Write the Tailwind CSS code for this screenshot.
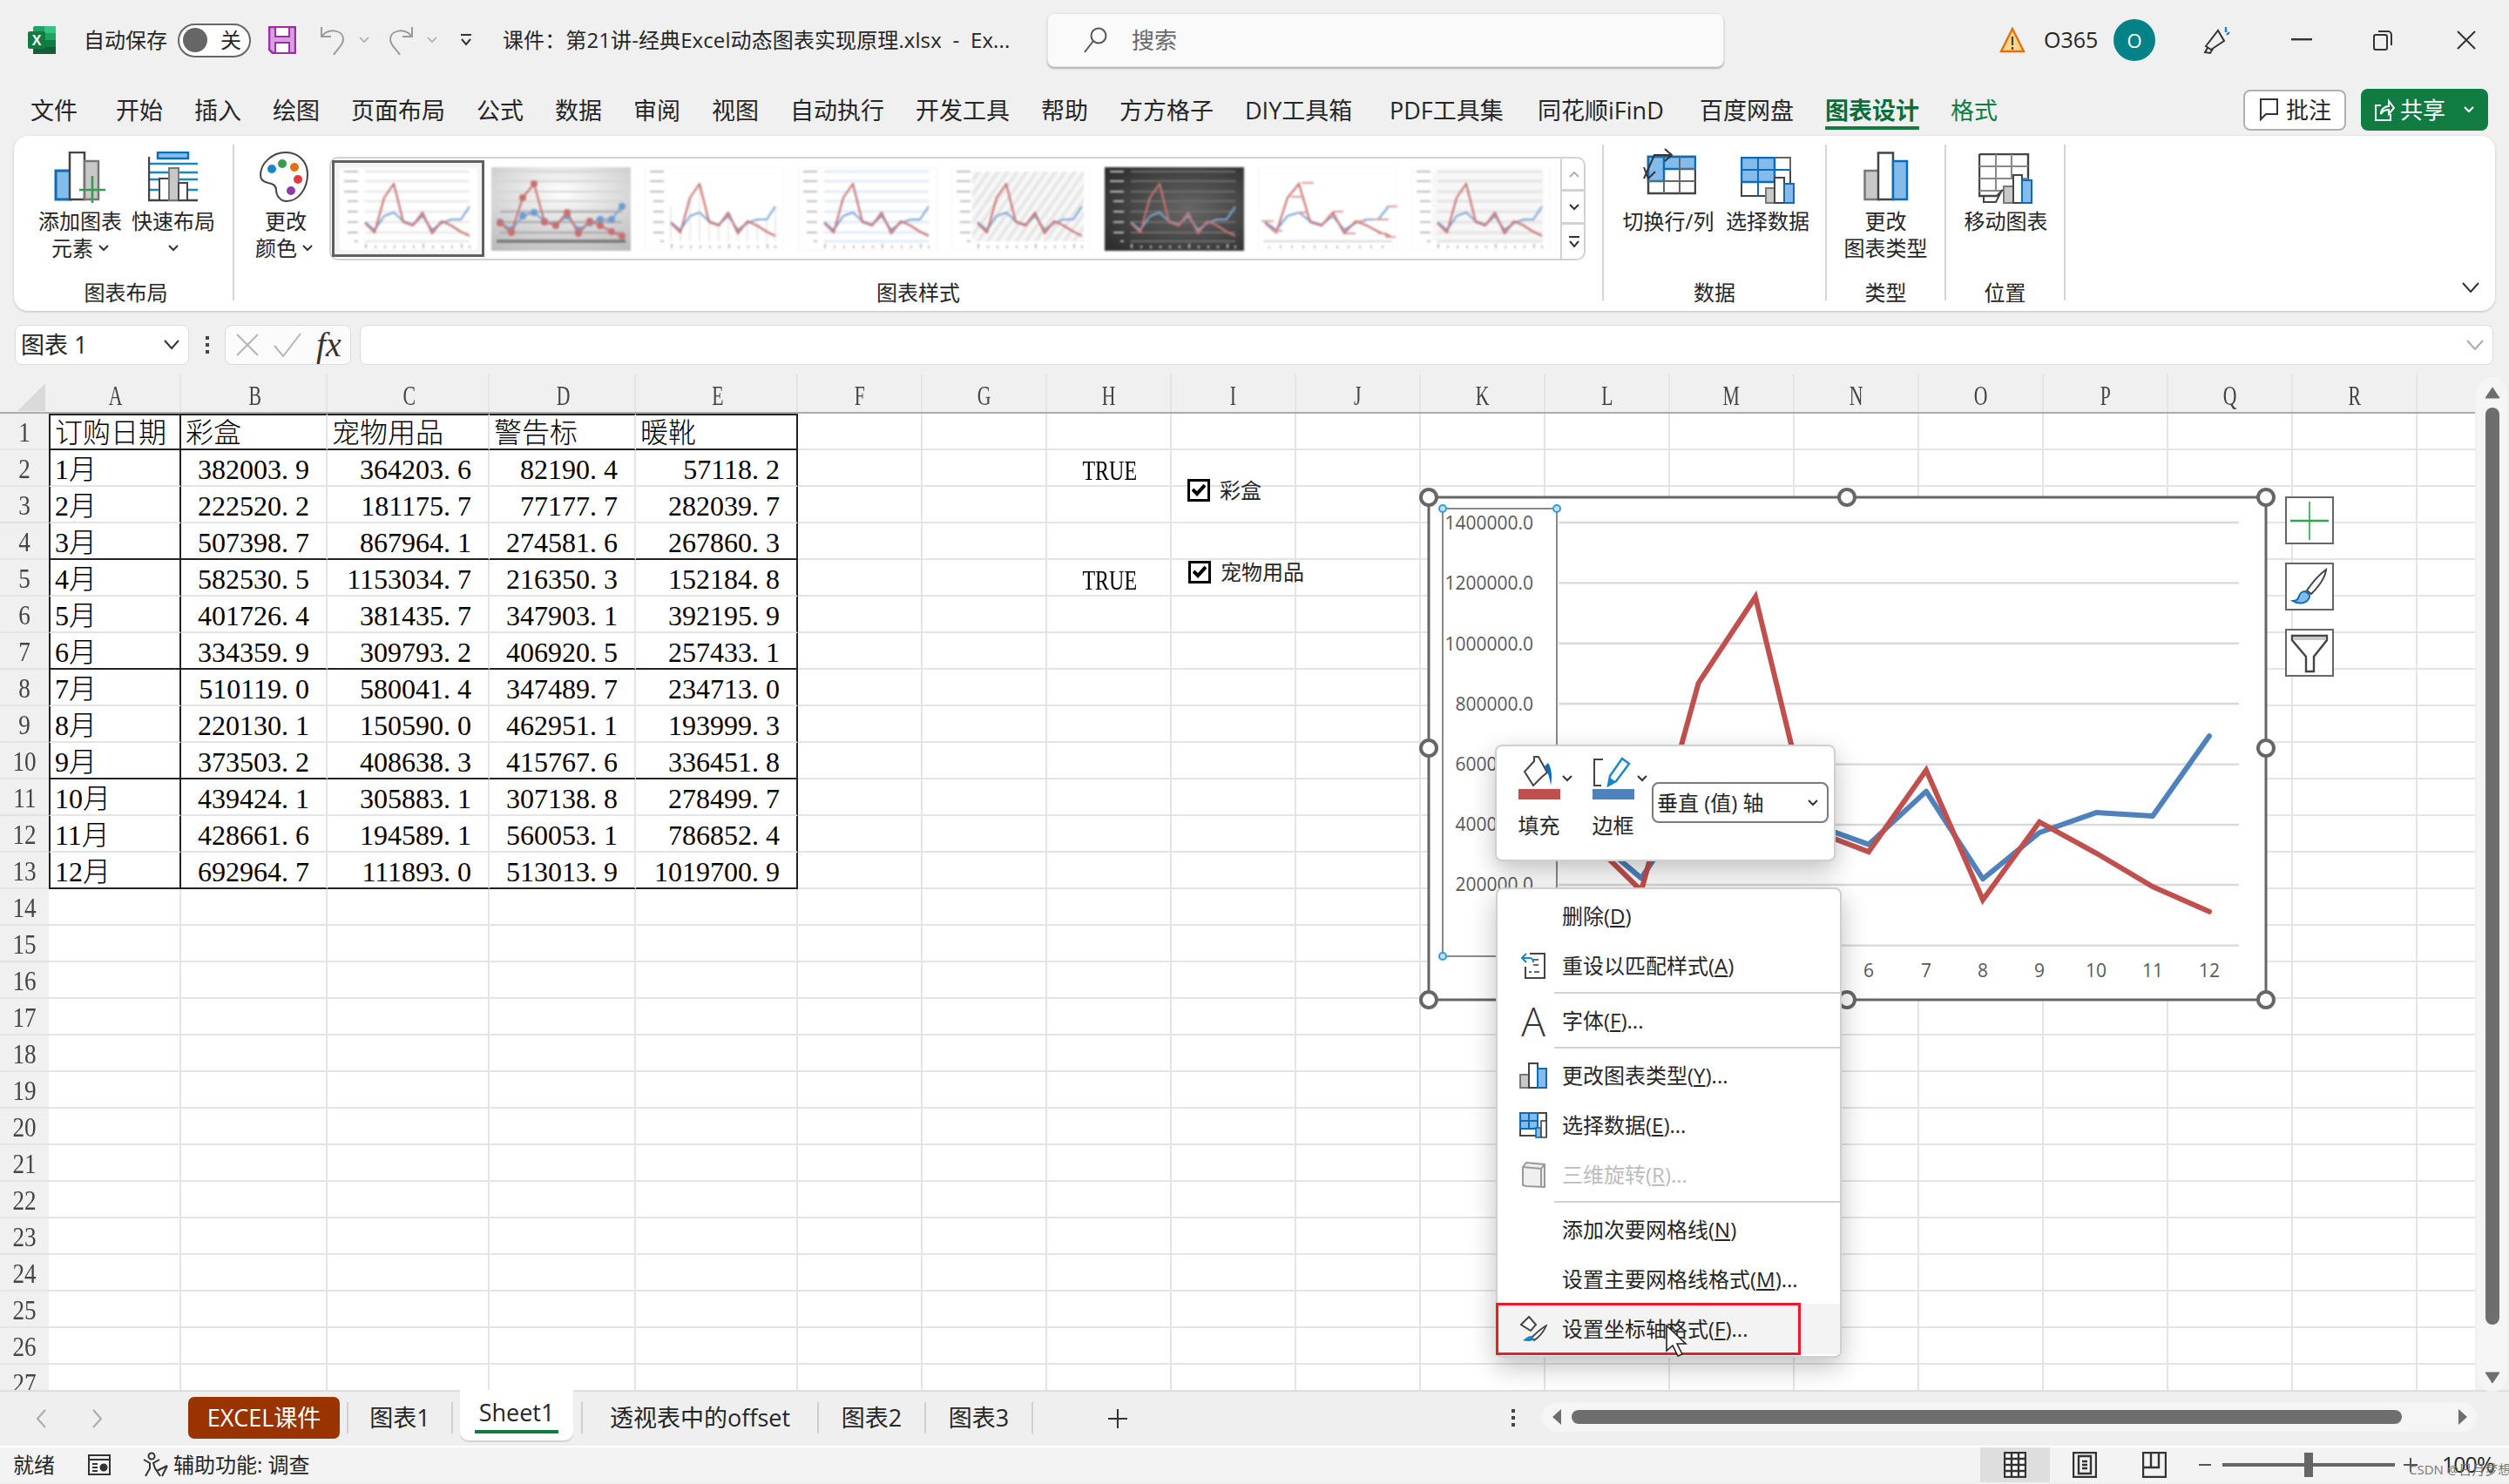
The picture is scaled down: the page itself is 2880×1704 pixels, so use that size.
<!DOCTYPE html>
<html lang="zh-CN">
<head>
<meta charset="utf-8">
<title>Excel</title>
<script src="https://cdn.jsdelivr.net/npm/@tailwindcss/browser@4"></script>
</head>
<body class="relative w-[2880px] h-[1704px] overflow-hidden bg-[#f0f0f0] text-[#262626] text-[24px] font-['Open_Sans','Noto_Sans_CJK_SC',sans-serif]">

<svg width="0" height="0" class="absolute">
  <defs>
    <g id="ln" fill="none" stroke-width="2.2" stroke-linejoin="round">
      <polyline stroke="#7ea6d8" points="30,63 41,72 52,56 63,52 74,62 85,66 96,56 107,72 118,64 129,60 140,60 150,45"/>
      <polyline stroke="#cb7472" points="30,64 41,75 52,35 63,19 74,63 85,67 96,52 107,76 118,62 129,67 140,74 150,79"/>
    </g>
    <g id="ax" stroke="#bdbdbd" stroke-width="2">
      <path d="M6 5h16M6 16h16M6 28h16M10 39h12M10 51h12M10 63h12M10 75h12M18 85h4"/>
      <path d="M31 88v5M42 90v3M53 90v3M64 90v3M75 90v3M86 90v3M97 88v5M108 90v3M119 90v3M130 90v3M141 88v5M150 90v3"/>
    </g>
    <path id="gr" d="M30 5h120M30 16h120M30 28h120M30 39h120M30 51h120M30 63h120M30 75h120M30 85h120"/>
    <radialGradient id="rg" cx="50%" cy="30%" r="80%"><stop offset="0" stop-color="#ffffff"/><stop offset="1" stop-color="#bcbcbc"/></radialGradient>
    <radialGradient id="rd" cx="60%" cy="50%" r="70%"><stop offset="0" stop-color="#666666"/><stop offset="1" stop-color="#2f2f2f"/></radialGradient>
    <pattern id="dg" width="9" height="9" patternUnits="userSpaceOnUse" patternTransform="rotate(35)"><rect width="9" height="9" fill="#f8f8f8"/><rect width="4" height="9" fill="#e6e6e6"/></pattern>
    <marker id="mb" markerWidth="5" markerHeight="5" refX="2.5" refY="2.5"><circle cx="2.5" cy="2.5" r="1.8" fill="#6f9bd1"/></marker>
    <marker id="mr" markerWidth="5" markerHeight="5" refX="2.5" refY="2.5"><circle cx="2.5" cy="2.5" r="1.8" fill="#cb6f6d"/></marker>
  </defs>
</svg>

<!-- title bar -->
<header class="flex h-[100px] items-center pb-[8px]">
  <svg class="ml-[32px] shrink-0" width="32" height="32" viewBox="0 0 32 32"><rect x="6" width="26" height="32" rx="2" fill="#21a366"/><rect x="19" width="13" height="8" fill="#33c481"/><rect x="19" y="16" width="13" height="8" fill="#107c41"/><rect x="6" y="16" width="13" height="16" fill="#185c37"/><rect x="19" y="24" width="13" height="8" fill="#185c37"/><rect y="6" width="20" height="20" rx="2" fill="#107c41"/><text x="10" y="22" text-anchor="middle" font-size="16" font-weight="700" fill="#fff" font-family="Liberation Sans">X</text></svg>
  <span class="ml-[32px] w-[108px] shrink-0">自动保存</span>
  <div class="flex h-[39px] w-[84px] shrink-0 items-center justify-between rounded-full border-2 border-[#666] bg-white pl-[4px] pr-[9px]"><span class="h-[28px] w-[28px] rounded-full bg-[#666]"></span><span class="leading-none">关</span></div>
  <svg class="ml-[20px] shrink-0" width="32" height="32" viewBox="0 0 32 32"><path d="M1 1h30v30H5l-4-4z" fill="#d9a0e0" stroke="#9c2fa8" stroke-width="2.5"/><rect x="8" y="1" width="16" height="11" fill="#fff" stroke="#9c2fa8" stroke-width="2"/><rect x="8" y="19" width="16" height="12" fill="#fff" stroke="#9c2fa8" stroke-width="2"/></svg>
  <svg class="ml-[26px] shrink-0" width="32" height="34" viewBox="0 0 32 34" fill="none" stroke="#9a9a9a" stroke-width="2"><path d="M3 2v11h11M3 13C12 2 28 6 28 16c0 7-6 10-11 18"/></svg>
  <svg class="ml-[14px] shrink-0" width="12" height="8" viewBox="0 0 12 8" fill="none" stroke="#aaa" stroke-width="1.6"><path d="M1 1l5 5 5-5"/></svg>
  <svg class="ml-[20px] shrink-0" width="32" height="34" viewBox="0 0 32 34" fill="none" stroke="#9a9a9a" stroke-width="2"><path d="M29 2v11H18M29 13C20 2 4 6 4 16c0 7 6 10 11 18"/></svg>
  <svg class="ml-[14px] shrink-0" width="12" height="8" viewBox="0 0 12 8" fill="none" stroke="#aaa" stroke-width="1.6"><path d="M1 1l5 5 5-5"/></svg>
  <svg class="ml-[26px] shrink-0" width="14" height="16" viewBox="0 0 14 16" fill="none" stroke="#333" stroke-width="2"><path d="M1 2h12M2 7l5 6 5-6"/></svg>
  <span class="ml-[35px] w-[590px] shrink-0 whitespace-pre text-[24px] tracking-[0.1px]">课件：第21讲-经典Excel动态图表实现原理.xlsx  -  Ex...</span>
  <div class="ml-[35px] flex h-[62px] w-[777px] shrink-0 items-center rounded-[8px] border border-[#e4e4e4] bg-[#fafafa] pl-[40px] shadow-[0_2px_2px_rgba(0,0,0,0.25)]">
    <svg width="28" height="30" viewBox="0 0 28 30" fill="none" stroke="#555" stroke-width="2"><circle cx="18" cy="10" r="8.5"/><path d="M12 16L2 29"/></svg>
    <span class="ml-[28px] text-[#6a6a6a] text-[26px]">搜索</span>
  </div>
  <svg class="ml-[316px] shrink-0" width="30" height="30" viewBox="0 0 30 30"><path d="M15 2l13 26H2z" fill="#ffd58a" stroke="#e3700f" stroke-width="2.4"/><path d="M15 11v10M15 23v3" stroke="#444" stroke-width="2.2"/></svg>
  <span class="ml-[21px] w-[64px] shrink-0 text-[25px]">O365</span>
  <div class="ml-[16px] flex h-[48px] w-[48px] shrink-0 items-center justify-center rounded-full bg-[#038387] text-[22px] text-white">O</div>
  <svg class="ml-[54px] shrink-0" width="34" height="34" viewBox="0 0 34 34" fill="none" stroke="#333" stroke-width="2"><path d="M4 24L18 6l7 12-15 10zM6 26l-3 5 6 1 3-5"/><path d="M27 2v6M31 8l-3 3" stroke="#1a86c8" stroke-width="2.4"/></svg>
  <svg class="ml-[68px] shrink-0" width="24" height="4" viewBox="0 0 24 4"><rect width="24" height="2.4" fill="#333"/></svg>
  <svg class="ml-[70px] shrink-0" width="22" height="24" viewBox="0 0 22 24" fill="none" stroke="#333" stroke-width="2"><rect x="1" y="6" width="15" height="17" rx="2"/><path d="M6 2h11a4 4 0 0 1 4 4v12"/></svg>
  <svg class="ml-[74px] shrink-0" width="22" height="22" viewBox="0 0 22 22" fill="none" stroke="#333" stroke-width="2"><path d="M1 1l20 20M21 1L1 21"/></svg>
</header>

<!-- menu tabs -->
<nav class="flex h-[56px] items-start pl-[35px] text-[27px] leading-[54px]">
  <a>文件</a><a class="ml-[44px]">开始</a><a class="ml-[36px]">插入</a><a class="ml-[36px]">绘图</a><a class="ml-[36px]">页面布局</a><a class="ml-[36px]">公式</a><a class="ml-[36px]">数据</a><a class="ml-[36px]">审阅</a><a class="ml-[36px]">视图</a><a class="ml-[36px]">自动执行</a><a class="ml-[36px]">开发工具</a><a class="ml-[36px]">帮助</a><a class="ml-[36px]">方方格子</a>
  <a class="ml-[36px] w-[124px] whitespace-nowrap">DIY工具箱</a><a class="ml-[42px] w-[130px] whitespace-nowrap">PDF工具集</a><a class="ml-[40px] w-[146px] whitespace-nowrap">同花顺iFinD</a><a class="ml-[40px]">百度网盘</a>
  <a class="relative ml-[36px] h-[49px] border-b-[4px] border-[#107c41] font-bold text-[#0f6b3a]">图表设计</a><a class="ml-[36px] text-[#107c41]">格式</a>
  <div class="ml-auto mr-[24px] flex h-[48px] items-center gap-[17px] self-start leading-none mt-[2px]">
    <div class="flex h-[47px] w-[118px] items-center justify-center gap-[8px] rounded-[8px] border-2 border-[#b0b0b0] bg-white text-[26px]"><svg width="24" height="28" viewBox="0 0 24 28" fill="none" stroke="#333" stroke-width="2"><path d="M2 2h20v17H9l-6 6V2z"/></svg>批注</div>
    <div class="flex h-[48px] w-[146px] items-center gap-[6px] rounded-[8px] bg-[#107c41] pl-[15px] text-[26px] text-white"><svg width="24" height="28" viewBox="0 0 24 28" fill="none" stroke="#fff" stroke-width="2"><path d="M8 9H2v17h17v-7M8 19c0-6 5-9 9-9V4l6 8-6 7v-5c-4 0-7 1-9 5z"/></svg>共享<svg class="ml-[15px]" width="12" height="8" viewBox="0 0 12 8" fill="none" stroke="#fff" stroke-width="2"><path d="M1 1l5 5 5-5"/></svg></div>
  </div>
</nav>

<!-- ribbon -->
<section class="relative mx-[16px] flex h-[201px] rounded-[16px] bg-white pt-[10px] shadow-[0_1px_3px_rgba(0,0,0,0.22)]">
  <!-- group 1 -->
  <div class="flex h-[179px] w-[253px] shrink-0 flex-col border-r-2 border-[#d4d4d4]">
    <div class="flex flex-1 pl-[22px]">
      <div class="flex w-[108px] flex-col items-center leading-[31px]">
        <svg class="mt-[8px]" width="60" height="60" viewBox="0 0 60 60"><rect x="2" y="22" width="17" height="33" fill="#83bcea" stroke="#0e6bb5" stroke-width="3"/><rect x="18" y="1" width="17" height="54" fill="#fff" stroke="#444" stroke-width="2.5"/><rect x="35" y="11" width="16" height="44" fill="#c8c8c8" stroke="#777" stroke-width="2.5"/><path d="M29 44h30M44 28v31" stroke="#3a9a52" stroke-width="2.6"/></svg>
        <span class="mt-[4px]">添加图表</span>
        <span class="flex items-center gap-[6px]">元素<svg width="12" height="8" viewBox="0 0 12 8" fill="none" stroke="#333" stroke-width="2"><path d="M1 1l5 5 5-5"/></svg></span>
      </div>
      <div class="flex w-[106px] flex-col items-center leading-[31px]">
        <svg class="mt-[8px]" width="58" height="60" viewBox="0 0 58 60"><rect x="11" y="1" width="35" height="7" fill="#83bcea" stroke="#0e6bb5" stroke-width="2.4"/><path d="M1 14h56M1 24h56M1 32h56M1 44h56" stroke="#1a86c8" stroke-width="2.6"/><path d="M1 6v50h56" fill="none" stroke="#444" stroke-width="2.4"/><rect x="13" y="31" width="11" height="25" fill="#fff" stroke="#444" stroke-width="2"/><rect x="24" y="19" width="11" height="37" fill="#c8c8c8" stroke="#777" stroke-width="2"/><rect x="35" y="36" width="10" height="20" fill="#fff" stroke="#444" stroke-width="2"/></svg>
        <span class="mt-[4px]">快速布局</span>
        <span class="flex h-[31px] items-center"><svg width="12" height="8" viewBox="0 0 12 8" fill="none" stroke="#333" stroke-width="2"><path d="M1 1l5 5 5-5"/></svg></span>
      </div>
    </div>
    <span class="h-[20px] pl-[6px] text-center leading-[22px]">图表布局</span>
  </div>
  <!-- group 2 -->
  <div class="flex h-[179px] w-[1572px] shrink-0 flex-col border-r-2 border-[#d4d4d4]">
    <div class="flex flex-1 pl-[9px]">
      <div class="flex w-[96px] flex-col items-center leading-[31px]">
        <svg class="mt-[8px]" width="56" height="60" viewBox="0 0 56 60"><path d="M30 1C14 1 1 14 1 27c0 5 4 8 9 9 6 1 9 3 9 8 0 7 5 13 12 13 14 0 24-15 24-31C55 12 45 1 30 1z" fill="#fff" stroke="#444" stroke-width="2"/><circle cx="14" cy="20" r="5" fill="#1a86c8"/><circle cx="26" cy="14" r="5" fill="#3a9a52"/><circle cx="40" cy="18" r="5" fill="#e3700f"/><circle cx="44" cy="32" r="5" fill="#e8383d"/><circle cx="36" cy="45" r="5" fill="#8e3aa8"/></svg>
        <span class="mt-[4px] pl-[4px]">更改</span>
        <span class="flex items-center gap-[6px]">颜色<svg width="12" height="8" viewBox="0 0 12 8" fill="none" stroke="#333" stroke-width="2"><path d="M1 1l5 5 5-5"/></svg></span>
      </div>
      <!-- gallery -->
      <div class="ml-[4px] mt-[14px] flex h-[119px] w-[1442px] items-center rounded-[10px] border-2 border-[#d2d2d2] pl-[1px]">
        <div class="flex h-[111px] w-[175px] shrink-0 items-center justify-center border-[3px] border-[#5f5f5f] bg-[#f3f3f3]">
          <svg class="blur-[1px]" width="160" height="96" viewBox="0 0 160 96"><rect width="160" height="96" fill="#fff" stroke="#eee"/><use href="#gr" stroke="#e8e8e8" stroke-width="2.5"/><use href="#ax"/><use href="#ln"/></svg>
        </div>
        <svg class="ml-[8px] shrink-0 blur-[1px]" width="160" height="96" viewBox="0 0 160 96"><rect width="160" height="96" fill="url(#rg)"/><path d="M10 5h140M10 16h140M10 28h140M10 39h140" stroke="#d5d5d5" stroke-width="2"/><path d="M10 51h140M10 63h140M10 75h140" stroke="#aeaeae" stroke-width="2.5"/><path d="M6 85h148" stroke="#777" stroke-width="3.5"/><g fill="none" stroke-width="2.2"><polyline stroke="#7ea6d8" marker-start="url(#mb)" marker-mid="url(#mb)" marker-end="url(#mb)" points="10,63 23,72 36,56 49,52 61,62 74,66 87,56 100,72 113,64 125,60 138,60 150,45"/><polyline stroke="#cb7472" marker-start="url(#mr)" marker-mid="url(#mr)" marker-end="url(#mr)" points="10,64 23,75 36,35 49,19 61,63 74,67 87,52 100,76 113,62 125,67 138,74 150,79"/></g></svg>
        <svg class="ml-[16px] shrink-0 blur-[1px]" width="160" height="96" viewBox="0 0 160 96"><rect width="160" height="96" fill="#fff" stroke="#eee"/><path d="M30 85V45M41 85V70M52 85V35M63 85V19M74 85V60M85 85V65M96 85V52M107 85V70M118 85V60M129 85V60M140 85V60M150 85V45" stroke="#ebebeb" stroke-width="2"/><use href="#ax"/><use href="#ln"/></svg>
        <svg class="ml-[16px] shrink-0 blur-[1px]" width="160" height="96" viewBox="0 0 160 96"><rect width="160" height="96" fill="#fff" stroke="#dfe9f5"/><use href="#gr" stroke="#e2ecf7" stroke-width="3"/><use href="#ax" stroke="#8fa9c9"/><use href="#ln"/></svg>
        <svg class="ml-[16px] shrink-0 blur-[1px]" width="160" height="96" viewBox="0 0 160 96"><rect width="160" height="96" fill="#fff" stroke="#eee"/><rect x="24" y="5" width="128" height="80" fill="url(#dg)"/><use href="#ax"/><use href="#ln"/></svg>
        <svg class="ml-[16px] shrink-0 blur-[1px]" width="160" height="96" viewBox="0 0 160 96"><rect width="160" height="96" fill="url(#rd)"/><use href="#gr" stroke="#6e6e6e" stroke-width="2"/><use href="#ax" stroke="#999"/><use href="#ln"/></svg>
        <svg class="ml-[16px] shrink-0 blur-[1px]" width="160" height="96" viewBox="0 0 160 96"><rect width="160" height="96" fill="#fff" stroke="#eee"/><path d="M6 85h148" stroke="#ddd" stroke-width="2.5"/><path d="M13 91v2M26 90v3M39 90v3M52 90v3M65 90v3M78 90v3M91 90v3M104 90v3M117 90v3M130 90v3M143 90v3" stroke="#bbb" stroke-width="2"/><g fill="none" stroke-width="2.2"><polyline stroke="#7ea6d8" points="8,63 21,72 34,56 47,52 60,62 73,66 86,56 99,72 112,64 125,60 138,60 150,45"/><polyline stroke="#cb7472" points="8,64 21,75 34,35 47,19 60,63 73,67 86,52 99,76 112,62 125,67 138,74 152,79"/></g><path d="M4 62h14M16 73h12M38 34h12M50 18h14M46 52h12M80 56h10M86 51h12M100 76h12M112 62h12M132 60h18M148 45h12M138 76h10M146 80h12" stroke="#d89b9a" stroke-width="2"/></svg>
        <svg class="ml-[16px] shrink-0 blur-[1px]" width="160" height="96" viewBox="0 0 160 96"><rect width="160" height="96" fill="#fff" stroke="#eee"/><rect x="24" y="5" width="128" height="80" fill="#f7f7f7"/><use href="#gr" stroke="#e4e4e4" stroke-width="3"/><use href="#ax"/><use href="#ln"/></svg>
        <div class="ml-[11px] flex h-full w-[29px] shrink-0 flex-col border-l-2 border-[#d2d2d2]">
          <div class="flex h-[38px] items-center justify-center border-b-[3px] border-[#d2d2d2]"><svg width="12" height="8" viewBox="0 0 12 8" fill="none" stroke="#aaa" stroke-width="1.8"><path d="M1 7l5-5 5 5"/></svg></div>
          <div class="flex h-[38px] items-center justify-center border-b-[3px] border-[#d2d2d2]"><svg width="12" height="8" viewBox="0 0 12 8" fill="none" stroke="#333" stroke-width="2"><path d="M1 1l5 5 5-5"/></svg></div>
          <div class="flex flex-1 items-center justify-center"><svg width="14" height="16" viewBox="0 0 14 16" fill="none" stroke="#333" stroke-width="2"><path d="M1 2h12M2 7l5 6 5-6"/></svg></div>
        </div>
      </div>
    </div>
    <span class="h-[20px] text-center leading-[22px]">图表样式</span>
  </div>
  <!-- group 3 -->
  <div class="flex h-[179px] w-[256px] shrink-0 flex-col border-r-2 border-[#d4d4d4]">
    <div class="flex flex-1 pl-[14px]">
      <div class="flex w-[120px] flex-col items-center leading-[31px]">
        <svg class="mt-[4px] ml-[2px]" width="62" height="64" viewBox="0 0 62 64"><rect x="7" y="10" width="54" height="42" fill="#fff" stroke="#444" stroke-width="2.5"/><path d="M7 10h54v14H25v14H7z" fill="#83bcea" stroke="#0e6bb5" stroke-width="2.5"/><path d="M43 10v42M25 38v14M7 38h54M43 24h18" stroke="#666" stroke-width="2"/><path d="M25 10v14" stroke="#0e6bb5" stroke-width="2.5"/><path d="M2 35L14 8h18M26 1l8 7-8 7M2 22l5 13 8-8" fill="none" stroke="#333" stroke-width="2"/></svg>
        <span class="mt-[4px] whitespace-nowrap">切换行/列</span>
      </div>
      <div class="flex w-[108px] flex-col items-center leading-[31px]">
        <svg class="mt-[14px]" width="62" height="54" viewBox="0 0 62 54"><rect x="1" y="1" width="56" height="44" fill="#fff" stroke="#444" stroke-width="2"/><path d="M1 1h38v28H1z" fill="#83bcea" stroke="#0e6bb5" stroke-width="2.5"/><path d="M20 1v44M1 15h38M39 15h18M1 29h38" stroke="#0e6bb5" stroke-width="2"/><path d="M39 1h18v15" fill="none" stroke="#666" stroke-width="2"/><rect x="29" y="36" width="12" height="17" fill="#c8c8c8" stroke="#777" stroke-width="2"/><rect x="39" y="24" width="11" height="29" fill="#fff" stroke="#444" stroke-width="2"/><rect x="50" y="31" width="11" height="22" fill="#83bcea" stroke="#0e6bb5" stroke-width="2"/></svg>
        <span class="mt-[4px] whitespace-nowrap">选择数据</span>
      </div>
    </div>
    <span class="h-[20px] text-center leading-[22px]">数据</span>
  </div>
  <!-- group 4 -->
  <div class="flex h-[179px] w-[137px] shrink-0 flex-col border-r-2 border-[#d4d4d4]">
    <div class="flex flex-1 flex-col items-center leading-[31px]">
      <svg class="mt-[8px]" width="52" height="60" viewBox="0 0 52 60"><rect x="1.5" y="22" width="17" height="33" fill="#c8c8c8" stroke="#777" stroke-width="2.5"/><rect x="17" y="1.5" width="17" height="53.5" fill="#fff" stroke="#444" stroke-width="2.5"/><rect x="34" y="11" width="16" height="44" fill="#83bcea" stroke="#0e6bb5" stroke-width="2.5"/></svg>
      <span class="mt-[4px]">更改</span>
      <span>图表类型</span>
    </div>
    <span class="h-[20px] text-center leading-[22px]">类型</span>
  </div>
  <!-- group 5 -->
  <div class="flex h-[179px] w-[137px] shrink-0 flex-col border-r-2 border-[#d4d4d4]">
    <div class="flex flex-1 flex-col items-center leading-[31px]">
      <svg class="mt-[10px]" width="62" height="58" viewBox="0 0 62 58"><path d="M1 1h56v40M1 1v48h20l7-7v0" fill="#fff" stroke="#444" stroke-width="2.4"/><path d="M1 15h56M1 29h56M1 43h26M20 1v42M38 1v28" stroke="#888" stroke-width="2"/><path d="M6 49v7h14l7-14" fill="none" stroke="#444" stroke-width="2"/><rect x="29" y="38" width="11" height="19" fill="#c8c8c8" stroke="#777" stroke-width="2"/><rect x="40" y="25" width="10" height="32" fill="#fff" stroke="#444" stroke-width="2"/><rect x="50" y="31" width="11" height="26" fill="#83bcea" stroke="#0e6bb5" stroke-width="2"/></svg>
      <span class="mt-[4px] pl-[2px]">移动图表</span>
    </div>
    <span class="h-[20px] text-center leading-[22px]">位置</span>
  </div>
  <svg class="absolute right-[18px] top-[168px]" width="20" height="12" viewBox="0 0 20 12" fill="none" stroke="#333" stroke-width="2"><path d="M1 1l9 10 9-10"/></svg>
</section>

<!-- formula bar -->
<div class="mt-[16px] flex h-[46px] items-stretch pl-[17px] pr-[18px]">
  <div class="flex w-[200px] items-center justify-between rounded-[8px] border border-[#dcdcdc] bg-white pl-[6px] pr-[10px] text-[27px]"><span>图表 1</span><svg width="18" height="12" viewBox="0 0 18 12" fill="none" stroke="#333" stroke-width="2"><path d="M1 1l8 9 8-9"/></svg></div>
  <div class="flex w-[41px] flex-col items-center justify-center gap-[4px]"><i class="h-[4px] w-[4px] bg-[#444]"></i><i class="h-[4px] w-[4px] bg-[#444]"></i><i class="h-[4px] w-[4px] bg-[#444]"></i></div>
  <div class="flex w-[145px] items-center rounded-[8px] border border-[#dcdcdc] bg-[#fbfbfb] pl-[12px]">
    <svg width="26" height="26" viewBox="0 0 26 26" fill="none" stroke="#b5b5b5" stroke-width="2"><path d="M1 1l24 24M25 1L1 25"/></svg>
    <svg class="ml-[17px]" width="32" height="28" viewBox="0 0 32 28" fill="none" stroke="#b5b5b5" stroke-width="2"><path d="M1 15l10 12L31 1"/></svg>
    <span class="ml-[17px] font-['Liberation_Serif',serif] text-[40px] italic leading-none text-[#333]">fx</span>
  </div>
  <div class="ml-[10px] flex flex-1 items-center justify-end rounded-[8px] border border-[#dcdcdc] bg-white pr-[10px]"><svg width="20" height="12" viewBox="0 0 20 12" fill="none" stroke="#aaa" stroke-width="2"><path d="M1 1l9 10 9-10"/></svg></div>
</div>

<!-- sheet -->
<main class="mt-[11px] flex h-[1166px] font-['Liberation_Serif','Noto_Sans_CJK_SC',serif] text-[32px] text-black">
  <div class="flex w-[2841px] shrink-0 flex-col overflow-hidden">
    <!-- column headers -->
    <div class="flex h-[45px] shrink-0 border-b-2 border-[#ababab] text-[#444] [&>div]:flex [&>div]:justify-center [&>div]:border-r-2 [&>div]:border-[#e4e4e4] [&>div]:pt-[5px] [&>div]:leading-[38px] [&>div>span]:inline-block [&>div>span]:scale-x-[.68]">
      <div class="w-[56px] !border-0 !block relative"><svg class="absolute left-[20px] top-[10px]" width="32" height="32" viewBox="0 0 32 32"><path d="M32 0v32H0z" fill="#dadada"/></svg></div>
      <div class="w-[152px] pl-[4px]"><span>A</span></div><div class="w-[168px] pl-[4px]"><span>B</span></div><div class="w-[186px] pl-[4px]"><span>C</span></div><div class="w-[168px] pl-[4px]"><span>D</span></div><div class="w-[186px] pl-[4px]"><span>E</span></div>
      <div class="w-[143px]"><span>F</span></div><div class="w-[143px]"><span>G</span></div><div class="w-[143px]"><span>H</span></div><div class="w-[143px]"><span>I</span></div><div class="w-[143px]"><span>J</span></div><div class="w-[143px]"><span>K</span></div><div class="w-[143px]"><span>L</span></div><div class="w-[143px]"><span>M</span></div><div class="w-[143px]"><span>N</span></div><div class="w-[143px]"><span>O</span></div><div class="w-[143px]"><span>P</span></div><div class="w-[143px]"><span>Q</span></div><div class="w-[143px]"><span>R</span></div>
    </div>
    <div class="flex min-h-0 flex-1 overflow-hidden">
      <!-- row headers -->
      <div class="w-[56px] shrink-0 text-center text-[#444] [&>div]:h-[42px] [&>div]:border-b-2 [&>div]:border-[#e4e4e4] [&>div]:pt-[2px] [&>div]:leading-[38px] [&>div>span]:inline-block [&>div>span]:scale-x-[.85]">
        <div><span>1</span></div><div><span>2</span></div><div><span>3</span></div><div><span>4</span></div><div><span>5</span></div><div><span>6</span></div><div><span>7</span></div><div><span>8</span></div><div><span>9</span></div><div><span>10</span></div><div><span>11</span></div><div><span>12</span></div><div><span>13</span></div><div><span>14</span></div><div><span>15</span></div><div><span>16</span></div><div><span>17</span></div><div><span>18</span></div><div><span>19</span></div><div><span>20</span></div><div><span>21</span></div><div><span>22</span></div><div><span>23</span></div><div><span>24</span></div><div><span>25</span></div><div><span>26</span></div><div><span>27</span></div>
      </div>
      <!-- A..E -->
      <div class="w-[860px] shrink-0 bg-white">
        <table class="w-[860px] table-fixed border-separate border-spacing-0 font-light [&_td]:h-[42px] [&_td]:border-b-2 [&_td]:border-r-2 [&_td]:border-[#e4e4e4] [&_td]:overflow-visible [&_td]:whitespace-nowrap [&_td]:pr-[19px] [&_td]:pt-[5px] [&_td]:text-right [&_td]:leading-[35px] [&_td:first-child]:border-l-2 [&_td:first-child]:border-r-[#222] [&_td:first-child]:border-l-[#222] [&_td:first-child]:pl-[5px] [&_td:first-child]:pr-0 [&_td:first-child]:text-left [&_td:last-child]:border-r-[#222] [&_tr:first-child_td]:border-t-2 [&_tr:first-child_td]:border-t-[#222] [&_tr:first-child_td]:pl-[5px] [&_tr:first-child_td]:pt-[3px] [&_tr:first-child_td]:text-left">
          <colgroup><col class="w-[152px]"><col class="w-[168px]"><col class="w-[186px]"><col class="w-[168px]"><col class="w-[186px]"></colgroup>
          <tbody>
          <tr class="[&>td]:border-b-[#222]"><td>订购日期</td><td>彩盒</td><td>宠物用品</td><td>警告标</td><td>暖靴</td></tr>
          <tr><td>1月</td><td>382003. 9</td><td>364203. 6</td><td>82190. 4</td><td>57118. 2</td></tr>
          <tr><td>2月</td><td>222520. 2</td><td>181175. 7</td><td>77177. 7</td><td>282039. 7</td></tr>
          <tr class="[&>td]:border-b-[#222]"><td>3月</td><td>507398. 7</td><td>867964. 1</td><td>274581. 6</td><td>267860. 3</td></tr>
          <tr><td>4月</td><td>582530. 5</td><td>1153034. 7</td><td>216350. 3</td><td>152184. 8</td></tr>
          <tr><td>5月</td><td>401726. 4</td><td>381435. 7</td><td>347903. 1</td><td>392195. 9</td></tr>
          <tr class="[&>td]:border-b-[#222]"><td>6月</td><td>334359. 9</td><td>309793. 2</td><td>406920. 5</td><td>257433. 1</td></tr>
          <tr><td>7月</td><td>510119. 0</td><td>580041. 4</td><td>347489. 7</td><td>234713. 0</td></tr>
          <tr><td>8月</td><td>220130. 1</td><td>150590. 0</td><td>462951. 1</td><td>193999. 3</td></tr>
          <tr class="[&>td]:border-b-[#222]"><td>9月</td><td>373503. 2</td><td>408638. 3</td><td>415767. 6</td><td>336451. 8</td></tr>
          <tr><td>10月</td><td>439424. 1</td><td>305883. 1</td><td>307138. 8</td><td>278499. 7</td></tr>
          <tr><td>11月</td><td>428661. 6</td><td>194589. 1</td><td>560053. 1</td><td>786852. 4</td></tr>
          <tr class="[&>td]:border-b-[#222]"><td>12月</td><td>692964. 7</td><td>111893. 0</td><td>513013. 9</td><td>1019700. 9</td></tr>
          </tbody>
        </table>
        <div class="grid h-[588px] grid-cols-[152px_168px_186px_168px_186px] [background-image:linear-gradient(to_bottom,transparent_40px,#e4e4e4_40px)] [background-size:100%_42px]">
          <div class="border-r-2 border-[#e4e4e4]"></div><div class="border-r-2 border-[#e4e4e4]"></div><div class="border-r-2 border-[#e4e4e4]"></div><div class="border-r-2 border-[#e4e4e4]"></div><div class="border-r-2 border-[#e4e4e4]"></div>
        </div>
      </div>
      <!-- F.. -->
      <div class="grid flex-1 grid-cols-[repeat(14,143px)] auto-rows-[42px] bg-white [background-image:linear-gradient(to_right,transparent_141px,#e4e4e4_141px),linear-gradient(to_bottom,transparent_40px,#e4e4e4_40px)] [background-size:143px_42px]">
        <div class="col-start-3 row-start-2 h-[42px] pt-[4px] text-center leading-[38px]"><span class="inline-block scale-x-[.75]">TRUE</span></div>
        <div class="col-start-3 row-start-5 h-[42px] pt-[4px] text-center leading-[38px]"><span class="inline-block scale-x-[.75]">TRUE</span></div>
      </div>
    </div>
  </div>
  <!-- vertical scrollbar -->
  <div class="ml-[2px] mt-[3px] flex h-[1165px] w-[35px] flex-col items-center rounded-full bg-[#f5f5f5]">
    <svg class="mt-[11px]" width="18" height="14" viewBox="0 0 18 14"><path d="M9 1l8 12H1z" fill="#6e6e6e" stroke="#6e6e6e" stroke-linejoin="round"/></svg>
    <div class="mt-[10px] h-[1053px] w-[16px] rounded-full bg-[#6e6e6e]"></div>
    <svg class="mt-[54px]" width="18" height="14" viewBox="0 0 18 14"><path d="M9 13L17 1H1z" fill="#6e6e6e" stroke="#6e6e6e" stroke-linejoin="round"/></svg>
  </div>
</main>

<!-- sheet tabs -->
<div class="flex h-[64px] items-start border-t-2 border-[#dedede] bg-[#efefef] text-[27px]">
  <svg class="ml-[41px] mt-[20px]" width="12" height="22" viewBox="0 0 12 22" fill="none" stroke="#aaa" stroke-width="2"><path d="M11 1L2 11l9 10"/></svg>
  <svg class="ml-[53px] mt-[20px]" width="12" height="22" viewBox="0 0 12 22" fill="none" stroke="#aaa" stroke-width="2"><path d="M1 1l9 10-9 10"/></svg>
  <div class="ml-[98px] mt-[6px] flex h-[48px] w-[174px] items-center justify-center rounded-[7px] bg-[#993300] text-white">EXCEL课件</div>
  <div class="ml-[8px] mt-[12px] flex h-[36px] w-[122px] items-center justify-center border-x-2 border-[#cfcfcf]">图表1</div>
  <div class="ml-[8px] -mt-[2px] flex h-[58px] w-[130px] flex-col items-center rounded-b-[10px] bg-white shadow-[0_2px_1px_rgba(0,0,0,0.12)]"><span class="mt-[8px] leading-[36px]">Sheet1</span><i class="mt-[2px] h-[4px] w-[96px] bg-[#107c41]"></i></div>
  <div class="ml-[9px] mt-[12px] flex h-[36px] w-[273px] items-center justify-center border-x-2 border-[#cfcfcf]">透视表中的offset</div>
  <div class="mt-[12px] flex h-[36px] w-[123px] items-center justify-center border-r-2 border-[#cfcfcf]">图表2</div>
  <div class="mt-[12px] flex h-[36px] w-[123px] items-center justify-center border-r-2 border-[#cfcfcf]">图表3</div>
  <svg class="ml-[86px] mt-[20px]" width="22" height="22" viewBox="0 0 22 22" stroke="#333" stroke-width="2"><path d="M11 0v22M0 11h22"/></svg>
  <div class="ml-[441px] mt-[20px] flex w-[4px] flex-col gap-[4px]"><i class="h-[4px] bg-[#444]"></i><i class="h-[4px] bg-[#444]"></i><i class="h-[4px] bg-[#444]"></i></div>
  <div class="ml-[31px] mt-[12px] flex h-[34px] w-[1073px] items-center rounded-full bg-[#f5f5f5] pl-[11px]">
    <svg width="12" height="18" viewBox="0 0 12 18"><path d="M11 0v18L1 9z" fill="#6e6e6e"/></svg>
    <div class="ml-[11px] h-[16px] w-[953px] rounded-full bg-[#6e6e6e]"></div>
    <svg class="ml-[64px]" width="12" height="18" viewBox="0 0 12 18"><path d="M1 0v18L11 9z" fill="#6e6e6e"/></svg>
  </div>
</div>

<!-- status bar -->
<footer class="flex h-[42px] items-center border-t-2 border-white bg-[#f3f3f3] pl-[15px] text-[24px]">
  <span>就绪</span>
  <svg class="ml-[38px]" width="26" height="24" viewBox="0 0 26 24" fill="none" stroke="#333" stroke-width="2"><path d="M1 1h24v22H1zM1 6h24M5 11h6M5 15h6M5 19h6"/><circle cx="18" cy="15" r="3.5" fill="#333"/></svg>
  <svg class="ml-[36px]" width="30" height="30" viewBox="0 0 30 30" fill="none" stroke="#333" stroke-width="2"><circle cx="11" cy="5" r="3.5"/><path d="M2 9l7 4v6l-5 9M20 9l-7 4 2 6 6 9M17 22l12-6M23 28l6-12"/></svg>
  <span class="ml-[6px]">辅助功能: 调查</span>
  <div class="ml-auto flex h-full items-center">
    <div class="flex h-full w-[80px] items-center justify-center bg-[#dedede]"><svg width="26" height="30" viewBox="0 0 26 30" fill="#fff" stroke="#333" stroke-width="2.4"><path d="M1 1h24v28H1zM1 8h24M1 15h24M1 22h24M9 1v28M17 1v28"/></svg></div>
    <div class="flex h-full w-[80px] items-center justify-center"><svg width="28" height="30" viewBox="0 0 28 30" fill="none" stroke="#333" stroke-width="2.4"><path d="M1 1h26v28H1zM7 5h14v20H7zM11 11h6M11 15h6M11 19h6"/></svg></div>
    <div class="flex h-full w-[80px] items-center justify-center"><svg width="28" height="30" viewBox="0 0 28 30" fill="none" stroke="#333" stroke-width="2.4"><path d="M1 1h26v28H1zM1 18h18V1M10 1v17"/></svg></div>
    <svg class="ml-[11px]" width="14" height="2"><rect width="14" height="2" fill="#555"/></svg>
    <div class="relative ml-[13px] h-[4px] w-[198px] bg-[#666]"><i class="absolute left-[94px] -top-[12px] h-[28px] w-[10px] bg-[#666]"></i></div>
    <svg class="ml-[10px]" width="16" height="16" viewBox="0 0 16 16" stroke="#555" stroke-width="2"><path d="M8 0v16M0 8h16"/></svg>
    <span class="ml-[28px] mr-[15px] w-[62px] text-[25px] tracking-[-1px]">100%</span>
  </div>
</footer>
<span class="absolute left-[2765px] top-[1677px] text-[15px] leading-[20px] font-['Open_Sans','Noto_Sans_CJK_SC',sans-serif] text-[#777] whitespace-nowrap">CSDN @日月梦想</span>

<!-- form checkboxes over the sheet -->
<div class="absolute left-[1363px] top-[550px] flex items-center gap-[11px]"><span class="flex h-[26px] w-[26px] items-center justify-center border-[3px] border-black bg-white"><svg width="16" height="14" viewBox="0 0 16 14" fill="none" stroke="#000" stroke-width="4"><path d="M1 6l5 5 9-10"/></svg></span><span class="leading-[26px]">彩盒</span></div>
<div class="absolute left-[1364px] top-[644px] flex items-center gap-[11px]"><span class="flex h-[26px] w-[26px] items-center justify-center border-[3px] border-black bg-white"><svg width="16" height="14" viewBox="0 0 16 14" fill="none" stroke="#000" stroke-width="4"><path d="M1 6l5 5 9-10"/></svg></span><span class="leading-[26px]">宠物用品</span></div>

<!-- chart -->
<svg class="absolute left-[1640px] top-[571px] overflow-visible" width="961" height="577" viewBox="1640 571 961 577">
  <rect x="1640" y="571" width="961" height="577" fill="#fff" stroke="#666" stroke-width="3"/>
  <path d="M1789 600h781M1789 669.4h781M1789 738.8h781M1789 808h781M1789 877.6h781M1789 947h781M1789 1016h781M1789 1085.6h781" stroke="#d9d9d9" stroke-width="2.4"/>
  <rect x="1656" y="584" width="131" height="514" fill="none" stroke="#8a8a8a" stroke-width="2"/>
  <g font-family="Open Sans" font-size="21" fill="#595959" text-anchor="end">
    <text x="1760" y="608">1400000.0</text><text x="1760" y="677">1200000.0</text><text x="1760" y="747">1000000.0</text><text x="1760" y="816">800000.0</text><text x="1760" y="885">600000.0</text><text x="1760" y="954">400000.0</text><text x="1760" y="1023">200000.0</text>
  </g>
  <g font-family="Open Sans" font-size="21" fill="#595959" text-anchor="middle">
    <text x="2145" y="1122">6</text><text x="2211" y="1122">7</text><text x="2276" y="1122">8</text><text x="2341" y="1122">9</text><text x="2406" y="1122">10</text><text x="2471" y="1122">11</text><text x="2536" y="1122">12</text>
  </g>
  <polyline fill="none" stroke="#4f81bd" stroke-width="6" stroke-linecap="round" stroke-linejoin="round" points="1819,953 1884,1008.4 1949.6,909.5 2015,883.5 2080,946.2 2145,969.6 2211,908.6 2276,1009.2 2341,956 2406,933.1 2471,936.9 2536,845.1"/>
  <polyline fill="none" stroke="#c0504d" stroke-width="6" stroke-linecap="round" stroke-linejoin="miter" points="1819,959.2 1884,1022.7 1949.6,784.4 2015,685.5 2080,953.2 2145,978.1 2211,884.3 2276,1033.3 2341,943.8 2406,979.5 2471,1018.1 2536,1046.8"/>
  <g fill="#fff" stroke="#666" stroke-width="4">
    <circle cx="1640" cy="571" r="9"/><circle cx="2120" cy="571" r="9"/><circle cx="2601" cy="571" r="9"/><circle cx="1640" cy="859" r="9"/><circle cx="2601" cy="859" r="9"/><circle cx="1640" cy="1148" r="9"/><circle cx="2120" cy="1148" r="9"/><circle cx="2601" cy="1148" r="9"/>
  </g>
  <g fill="#bfe0f7" stroke="#3a9ad9" stroke-width="2">
    <circle cx="1656" cy="584" r="4"/><circle cx="1787" cy="584" r="4"/><circle cx="1656" cy="1098" r="4"/>
  </g>
</svg>

<!-- chart side buttons -->
<div class="absolute left-[2623px] top-[570px] flex flex-col gap-[21px]">
  <div class="flex h-[55px] w-[56px] items-center justify-center border-2 border-[#666] bg-white"><svg width="44" height="44" viewBox="0 0 44 44" stroke="#2ea44f"><path d="M22 0v44" stroke-width="1.6"/><path d="M0 22h44" stroke-width="2.4"/></svg></div>
  <div class="flex h-[55px] w-[56px] items-center justify-center border-2 border-[#666] bg-white"><svg width="46" height="44" viewBox="0 0 46 44"><path d="M42 2C34 8 26 17 20 26l5 4C33 22 41 12 42 2z" fill="#fff" stroke="#444" stroke-width="2"/><path d="M18 27c-6 0-7 5-8 8-1 2-4 3-6 3 4 3 13 4 17-1 3-3 2-7 1-7z" fill="#83bcea" stroke="#0e6bb5" stroke-width="2"/></svg></div>
  <div class="flex h-[55px] w-[56px] items-center justify-center border-2 border-[#666] bg-white"><svg width="44" height="46" viewBox="0 0 44 46"><path d="M2 3h40v5L27 27v17h-9V27L2 8z" fill="#fff" stroke="#444" stroke-width="2.4"/><path d="M3 4h38v4H3z" fill="#c8c8c8"/></svg></div>
</div>

<!-- mini toolbar -->
<div class="absolute left-[1716px] top-[855px] flex h-[134px] w-[391px] rounded-[8px] border-2 border-[#cfcfcf] bg-white pl-[6px] pt-[11px] shadow-[0_10px_28px_rgba(0,0,0,0.25)]">
  <div class="relative flex w-[85px] flex-col items-center">
    <svg class="h-[36px]" width="40" height="36" viewBox="0 0 40 36" fill="none" stroke="#444" stroke-width="2"><path d="M13 34L3 18 14 6V1h5l10 18-6 5z" fill="#fff"/><path d="M30 8c4 6 5 16 3 26-1-8-3-16-7-22z" fill="#0e6bb5" stroke="none"/></svg>
    <svg class="absolute right-[4px] top-[22px]" width="12" height="8" viewBox="0 0 12 8" fill="none" stroke="#333" stroke-width="2"><path d="M1 1l5 5 5-5"/></svg>
    <i class="mt-[2px] h-[12px] w-[48px] bg-[#c0504d]"></i>
    <span class="mt-[16px] leading-[28px]">填充</span>
  </div>
  <div class="relative flex w-[85px] flex-col items-center">
    <svg class="h-[36px]" width="48" height="36" viewBox="0 0 48 36" fill="none" stroke="#444" stroke-width="2"><path d="M12 4H2v30h8"/><path d="M18 34l2-11L34 3l8 6-15 20z" fill="#fff" stroke="#1a86c8" stroke-width="2.4"/><path d="M18 34l2-9 7 5z" fill="#1a86c8" stroke="none"/></svg>
    <svg class="absolute right-[3px] top-[22px]" width="12" height="8" viewBox="0 0 12 8" fill="none" stroke="#333" stroke-width="2"><path d="M1 1l5 5 5-5"/></svg>
    <i class="mt-[2px] h-[12px] w-[48px] bg-[#4f81bd]"></i>
    <span class="mt-[16px] leading-[28px]">边框</span>
  </div>
  <div class="ml-[2px] mt-[30px] flex h-[47px] w-[203px] items-center justify-between rounded-[8px] border-2 border-[#7a7a7a] pl-[4px] pr-[10px]"><span class="whitespace-pre">垂直 (值) 轴</span><svg width="12" height="8" viewBox="0 0 12 8" fill="none" stroke="#333" stroke-width="2"><path d="M1 1l5 5 5-5"/></svg></div>
</div>

<!-- context menu -->
<div class="absolute left-[1717px] top-[1019px] w-[397px] rounded-[8px] border-2 border-[#cfcfcf] bg-white py-[2px] shadow-[0_10px_30px_rgba(0,0,0,0.25)]">
  <div class="flex h-[57px] items-center pl-[74px]">删除(<span class="underline">D</span>)</div>
  <div class="flex h-[57px] items-center"><span class="flex w-[74px] justify-center pl-[8px]"><svg width="28" height="30" viewBox="0 0 28 30" fill="none"><path d="M10 1h17v28H5V16" stroke="#444" stroke-width="2"/><path d="M14 8h6M14 14h6M9 22h3M15 22h6" stroke="#666" stroke-width="2"/><path d="M6 1L1 6l5 5M2 6h8c2 0 4 2 4 5" stroke="#1a86c8" stroke-width="2.2"/></svg></span>重设以匹配样式(<span class="underline">A</span>)</div>
  <div class="flex h-[6px] items-center pl-[65px]"><i class="h-[2px] w-full bg-[#d2d2d2]"></i></div>
  <div class="flex h-[57px] items-center"><span class="flex w-[74px] justify-center pl-[8px] text-[46px] font-light leading-none text-[#333]">A</span>字体(<span class="underline">F</span>)...</div>
  <div class="flex h-[6px] items-center pl-[65px]"><i class="h-[2px] w-full bg-[#d2d2d2]"></i></div>
  <div class="flex h-[57px] items-center"><span class="flex w-[74px] justify-center pl-[8px]"><svg width="32" height="30" viewBox="0 0 32 30"><rect x="1" y="14" width="10" height="15" fill="#c8c8c8" stroke="#777" stroke-width="2"/><rect x="11" y="1" width="10" height="28" fill="#fff" stroke="#444" stroke-width="2"/><rect x="21" y="7" width="10" height="22" fill="#83bcea" stroke="#0e6bb5" stroke-width="2"/></svg></span>更改图表类型(<span class="underline">Y</span>)...</div>
  <div class="flex h-[57px] items-center"><span class="flex w-[74px] justify-center pl-[8px]"><svg width="32" height="30" viewBox="0 0 32 30" fill="none"><rect x="1" y="1" width="30" height="26" stroke="#444" stroke-width="2"/><path d="M1 1h20v18H1z" fill="#83bcea" stroke="#0e6bb5" stroke-width="2"/><path d="M11 1v18M1 10h20" stroke="#0e6bb5" stroke-width="2"/><rect x="19" y="18" width="6" height="11" fill="#83bcea" stroke="#0e6bb5" stroke-width="1.6"/><rect x="25" y="10" width="6" height="19" fill="#fff" stroke="#444" stroke-width="1.6"/></svg></span>选择数据(<span class="underline">E</span>)...</div>
  <div class="flex h-[57px] items-center text-[#bdbdbd]"><span class="flex w-[74px] justify-center pl-[8px]"><svg width="28" height="30" viewBox="0 0 28 30"><path d="M2 6l4-5 21 2v26l-21-1-4-1z" fill="#efefef" stroke="#9a9a9a" stroke-width="2"/><path d="M2 6l21 2v21M23 8l4-5" fill="none" stroke="#9a9a9a" stroke-width="2"/></svg></span>三维旋转(<span class="underline">R</span>)...</div>
  <div class="flex h-[6px] items-center pl-[65px]"><i class="h-[2px] w-full bg-[#d2d2d2]"></i></div>
  <div class="flex h-[57px] items-center pl-[74px]">添加次要网格线(<span class="underline">N</span>)</div>
  <div class="flex h-[57px] items-center pl-[74px] whitespace-nowrap">设置主要网格线格式(<span class="underline">M</span>)...</div>
  <div class="relative flex h-[58px] items-center bg-[#f3f3f3]"><span class="flex w-[74px] justify-center pl-[8px]"><svg width="32" height="30" viewBox="0 0 32 30" fill="none"><path d="M2 10L11 1l8 9-6 7z" fill="#fff" stroke="#444" stroke-width="2"/><path d="M31 11C24 15 19 20 14 25l3 3c6-4 11-10 14-17z" stroke="#444" stroke-width="1.8"/><path d="M4 28c5 2 10 1 13-1l-3-4c-4 0-7 3-10 5z" fill="#1a86c8"/></svg></span>设置坐标轴格式(<span class="underline">F</span>)...
    <i class="absolute -left-[2px] -top-[1px] h-[60px] w-[350px] border-[3px] border-[#ed1c24]"></i>
  </div>
</div>
<svg class="absolute left-[1911px] top-[1521px]" width="28" height="38" viewBox="0 0 28 38"><path d="M2 1v29l7-6 6 12 5-2-6-12h10z" fill="#fff" stroke="#222" stroke-width="1.6"/></svg>

</body>
</html>
